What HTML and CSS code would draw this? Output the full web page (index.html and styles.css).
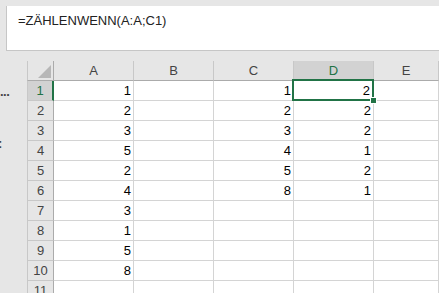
FILE: index.html
```html
<!DOCTYPE html>
<html lang="de">
<head>
    <meta charset="UTF-8">
    <title>ZÄHLENWENN</title>
    <link rel="stylesheet" href="styles.css">
</head>
<body>
    <div class="top">
        <div class="formula">=ZÄHLENWENN(A:A;C1)</div>
    </div>
    <div class="main">
        <div class="side">
            <div class="dots">...</div>
            <div class="colon">:</div>
        </div>
        <div class="sheet">
            <div class="hd corner">
                <svg width="13" height="13" viewBox="0 0 13 13"><polygon points="13,0 13,13 0,13" fill="#b7b7b7"/></svg>
            </div>
            <div class="hd">A</div>
            <div class="hd">B</div>
            <div class="hd">C</div>
            <div class="hd active-col">D</div>
            <div class="hd">E</div>

            <div class="rh active-row">1</div><div class="c">1</div><div class="c"></div><div class="c">1</div><div class="c sel">2<span class="handle"></span></div><div class="c"></div>
            <div class="rh">2</div><div class="c">2</div><div class="c"></div><div class="c">2</div><div class="c">2</div><div class="c"></div>
            <div class="rh">3</div><div class="c">3</div><div class="c"></div><div class="c">3</div><div class="c">2</div><div class="c"></div>
            <div class="rh">4</div><div class="c">5</div><div class="c"></div><div class="c">4</div><div class="c">1</div><div class="c"></div>
            <div class="rh">5</div><div class="c">2</div><div class="c"></div><div class="c">5</div><div class="c">2</div><div class="c"></div>
            <div class="rh">6</div><div class="c">4</div><div class="c"></div><div class="c">8</div><div class="c">1</div><div class="c"></div>
            <div class="rh">7</div><div class="c">3</div><div class="c"></div><div class="c"></div><div class="c"></div><div class="c"></div>
            <div class="rh">8</div><div class="c">1</div><div class="c"></div><div class="c"></div><div class="c"></div><div class="c"></div>
            <div class="rh">9</div><div class="c">5</div><div class="c"></div><div class="c"></div><div class="c"></div><div class="c"></div>
            <div class="rh">10</div><div class="c">8</div><div class="c"></div><div class="c"></div><div class="c"></div><div class="c"></div>
            <div class="rh">11</div><div class="c"></div><div class="c"></div><div class="c"></div><div class="c"></div><div class="c"></div>
        </div>
    </div>
</body>
</html>
```

FILE: styles.css
```css
body {
    margin: 0;
    height: 293px;
    overflow: hidden;
    background-color: #e6e6e6;
    font-family: "Liberation Sans", Arial, sans-serif;
    font-size: 13px;
    color: #000;
}
.top {
    padding: 6px 0 0 6px;
}
.formula {
    height: 45px;
    box-sizing: border-box;
    background-color: #fff;
    border-left: 1px solid #c6c6c6;
    border-bottom: 1px solid #c6c6c6;
    padding: 7px 0 0 11px;
    color: #222;
}
.main {
    display: flex;
    margin-top: 10px;
}
.side {
    width: 27px;
    flex-shrink: 0;
    color: #444;
    overflow: hidden;
}
.dots {
    margin-top: 21px;
    line-height: 20px;
    font-weight: bold;
    letter-spacing: -0.5px;
}
.colon {
    margin-top: 34px;
    text-indent: -2px;
    font-weight: bold;
}
.sheet {
    flex: 1;
    display: grid;
    grid-template-columns: 27px repeat(4, 80px) 1fr;
    grid-auto-rows: 20px;
}
.sheet > div {
    box-sizing: border-box;
    border-right: 1px solid #d4d4d4;
    border-bottom: 1px solid #d4d4d4;
    line-height: 19px;
}
.sheet .hd {
    text-align: center;
    color: #444;
    border-right-color: #c8c8c8;
    border-bottom-color: #ababab;
}
.sheet .corner {
    border-left: 1px solid #c8c8c8;
    border-right-color: #ababab;
    display: flex;
    justify-content: flex-end;
    align-items: flex-end;
    padding: 0 2px 2px 0;
}
.sheet .corner svg {
    display: block;
}
.sheet .rh {
    text-align: center;
    color: #444;
    background-color: #e6e6e6;
    border-left: 1px solid #c8c8c8;
    border-right-color: #ababab;
    border-bottom-color: #c8c8c8;
}
.sheet .c {
    background-color: #fff;
    text-align: right;
    padding-right: 2px;
}
.sheet .active-col {
    background-color: #d2d2d2;
    color: #217346;
    border-bottom: 2px solid #217346;
}
.sheet .active-row {
    background-color: #d2d2d2;
    color: #217346;
    border-right: 2px solid #217346;
}
.sheet .sel {
    position: relative;
    padding-right: 3px;
}
.sel::after {
    content: "";
    position: absolute;
    top: -2px;
    left: -2px;
    right: -1px;
    bottom: -1px;
    border: 2px solid #217346;
}
.handle {
    position: absolute;
    right: -4px;
    bottom: -4px;
    width: 5px;
    height: 5px;
    background-color: #217346;
    border: 1px solid #fff;
    z-index: 1;
}
```
